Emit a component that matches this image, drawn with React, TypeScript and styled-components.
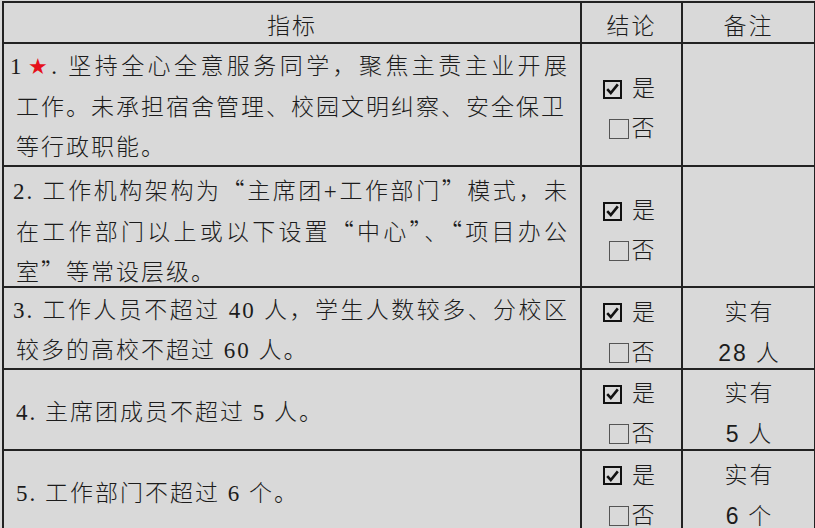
import React from 'react';
import styled, { createGlobalStyle } from 'styled-components';

const GlobalStyle = createGlobalStyle`
	html,
	body {
		margin: 0;
		padding: 0;
		background: #d9d9d9;
	}
	body {
		font-family: 'Liberation Serif', 'Noto Sans CJK SC', serif;
		color: #1c1c1c;
	}
`;

const Sheet = styled.table`
	border-collapse: collapse;
	table-layout: fixed;
	width: 812px;
	margin: 1px 0 0 2px;
	font-size: 23px;
	font-weight: 300;
	letter-spacing: 2px;
`;

const Row = styled.tr<{ $h: number }>`
	height: ${(p) => p.$h}px;
`;

const HeadCell = styled.th`
	border: 2px solid #222;
	font-weight: 300;
	text-align: center;
	padding: 9px 0 0;
	line-height: 24px;
`;

const TextCell = styled.td`
	border: 2px solid #222;
	padding: 6px 11px 0 12px;
	vertical-align: middle;
`;

const Lines = styled.div`
	display: flex;
	flex-direction: column;
	gap: 16.5px;
`;

const Line = styled.div<{ $fill?: boolean; $shift?: number }>`
	height: 24px;
	line-height: 24px;
	margin-left: ${(p) => p.$shift ?? 0}px;
	text-align: left;
	text-align-last: ${(p) => (p.$fill ? 'justify' : 'left')};
`;

const CenterCell = styled.td`
	border: 2px solid #222;
	padding: 9px 0 0;
	vertical-align: middle;
	text-align: center;
	letter-spacing: 0;
`;

const Stack = styled.div`
	display: flex;
	flex-direction: column;
	align-items: center;
	gap: 16px;
`;

const Star = styled.span`
	font-family: 'DejaVu Sans', sans-serif;
	font-size: 22px;
	color: #e5101a;
	letter-spacing: 2px;
	margin-left: 3px;
`;

const Q = styled.span`
	font-family: 'Noto Sans CJK SC', sans-serif;
`;

const Choice = styled.div<{ $shift?: number }>`
	display: flex;
	align-items: center;
	height: 24px;
	line-height: 24px;
	margin-left: ${(p) => p.$shift ?? 0}px;
`;

const TickBox = styled.span`
	box-sizing: border-box;
	width: 19px;
	height: 19px;
	border: 2px solid #111;
	display: inline-flex;
	align-items: center;
	justify-content: center;
	margin-right: 10px;
`;

const EmptyBox = styled.span`
	box-sizing: border-box;
	width: 20px;
	height: 20px;
	border: 1.5px solid #555;
	margin-right: 3px;
`;

const Note = styled.div`
	height: 24px;
	line-height: 24px;
	letter-spacing: 2px;
	padding-left: 2px;
`;

const Num = styled.span`
	font-family: 'Liberation Sans', sans-serif;
	font-weight: 400;
`;

const Verdict: React.FC = () => (
	<Stack>
		<Choice $shift={-5}>
			<TickBox>
				<svg width="13" height="12" viewBox="0 0 13 12">
					<path d="M1.2 6.2 L4.8 10 L11.8 1.4" fill="none" stroke="#111" strokeWidth="2.6" />
				</svg>
			</TickBox>
			是
		</Choice>
		<Choice>
			<EmptyBox />否
		</Choice>
	</Stack>
);

const Remark: React.FC<{ n?: string; unit?: string }> = ({ n, unit }) =>
	n ? (
		<Stack>
			<Note>实有</Note>
			<Note>
				<Num>{n}</Num> {unit}
			</Note>
		</Stack>
	) : null;

export default function App() {
	return (
		<>
			<GlobalStyle />
			<Sheet>
				<colgroup>
					<col style={{ width: 578 }} />
					<col style={{ width: 101 }} />
					<col style={{ width: 133 }} />
				</colgroup>
				<thead>
					<Row $h={41}>
						<HeadCell>指标</HeadCell>
						<HeadCell>结论</HeadCell>
						<HeadCell>备注</HeadCell>
					</Row>
				</thead>
				<tbody>
					<Row $h={123}>
						<TextCell>
							<Lines>
								<Line $fill $shift={-6}>
									1<Star>★</Star>. 坚持全心全意服务同学，聚焦主责主业开展
								</Line>
								<Line>工作。未承担宿舍管理、校园文明纠察、安全保卫</Line>
								<Line>等行政职能。</Line>
							</Lines>
						</TextCell>
						<CenterCell>
							<Verdict />
						</CenterCell>
						<CenterCell />
					</Row>
					<Row $h={121}>
						<TextCell>
							<Lines>
								<Line $fill $shift={-3}>
									2. 工作机构架构为<Q>“</Q>主席团+工作部门<Q>”</Q>模式，未
								</Line>
								<Line $fill>
									在工作部门以上或以下设置<Q>“</Q>中心<Q>”</Q>、<Q>“</Q>项目办公
								</Line>
								<Line>
									室<Q>”</Q>等常设层级。
								</Line>
							</Lines>
						</TextCell>
						<CenterCell>
							<Verdict />
						</CenterCell>
						<CenterCell />
					</Row>
					<Row $h={82}>
						<TextCell>
							<Lines>
								<Line $fill $shift={-3}>
									3. 工作人员不超过 40 人，学生人数较多、分校区
								</Line>
								<Line>较多的高校不超过 60 人。</Line>
							</Lines>
						</TextCell>
						<CenterCell>
							<Verdict />
						</CenterCell>
						<CenterCell>
							<Remark n="28" unit="人" />
						</CenterCell>
					</Row>
					<Row $h={81}>
						<TextCell>
							<Line>4. 主席团成员不超过 5 人。</Line>
						</TextCell>
						<CenterCell>
							<Verdict />
						</CenterCell>
						<CenterCell>
							<Remark n="5" unit="人" />
						</CenterCell>
					</Row>
					<Row $h={82}>
						<TextCell>
							<Line>5. 工作部门不超过 6 个。</Line>
						</TextCell>
						<CenterCell>
							<Verdict />
						</CenterCell>
						<CenterCell>
							<Remark n="6" unit="个" />
						</CenterCell>
					</Row>
				</tbody>
			</Sheet>
		</>
	);
}
